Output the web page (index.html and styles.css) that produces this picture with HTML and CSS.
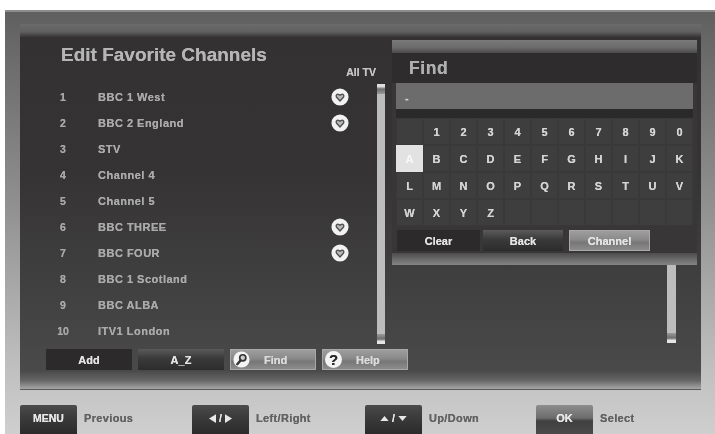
FILE: index.html
```html
<!DOCTYPE html>
<html lang="en">
<head>
<meta charset="utf-8">
<title>Edit Favorite Channels</title>
<link rel="stylesheet" href="styles.css">
</head>
<body>
<svg class="defs" width="0" height="0" aria-hidden="true">
  <symbol id="heart" viewBox="0 0 20 20">
    <circle cx="10" cy="10" r="9.5" fill="#f2f2f2"/>
    <path d="M10 14.5 L6 10 C5 7.5 7 6.5 8.2 7 L10 8 L11.8 7 C13 6.5 15 7.5 14 10 Z" fill="#b8b8b8" stroke="#4f4f4f" stroke-width="1.5" stroke-linejoin="round"/>
  </symbol>
</svg>
<main class="screen">
  <section class="panel">
    <div class="band"></div>
    <div class="content">
      <div class="left">
        <h1 class="title">Edit Favorite Channels</h1>
        <div class="all-tv">All TV</div>
        <div class="list-wrap">
          <ol class="list">
            <li class="row"><span class="num">1</span><span class="name">BBC 1 West</span><svg class="heart"><use href="#heart"/></svg></li>
            <li class="row"><span class="num">2</span><span class="name">BBC 2 England</span><svg class="heart"><use href="#heart"/></svg></li>
            <li class="row"><span class="num">3</span><span class="name">STV</span></li>
            <li class="row"><span class="num">4</span><span class="name">Channel 4</span></li>
            <li class="row"><span class="num">5</span><span class="name">Channel 5</span></li>
            <li class="row"><span class="num">6</span><span class="name">BBC THREE</span><svg class="heart"><use href="#heart"/></svg></li>
            <li class="row"><span class="num">7</span><span class="name">BBC FOUR</span><svg class="heart"><use href="#heart"/></svg></li>
            <li class="row"><span class="num">8</span><span class="name">BBC 1 Scotland</span></li>
            <li class="row"><span class="num">9</span><span class="name">BBC ALBA</span></li>
            <li class="row"><span class="num">10</span><span class="name">ITV1 London</span></li>
          </ol>
          <div class="scrollbar"><span class="cap cap-up"></span><span class="cap cap-down"></span></div>
        </div>
        <div class="actions">
          <div class="btn btn-dark">Add</div>
          <div class="btn btn-mid">A_Z</div>
          <div class="btn btn-light">
            <svg class="btn-icon" viewBox="0 0 20 20"><circle cx="10" cy="10" r="9.5" fill="#f4f4f4"/><circle cx="11.5" cy="8" r="3.6" fill="#ccc" stroke="#333" stroke-width="2"/><path d="M9 11 L5 15.5" stroke="#333" stroke-width="2.8" stroke-linecap="round"/></svg>
            <span class="btn-label">Find</span>
          </div>
          <div class="btn btn-light">
            <span class="help-icon">?</span>
            <span class="btn-label">Help</span>
          </div>
        </div>
      </div>
      <div class="right">
        <div class="find">
          <div class="find-band"></div>
          <h2 class="find-title">Find</h2>
          <div class="find-input">-</div>
          <div class="keys">
            <span class="key"></span><span class="key">1</span><span class="key">2</span><span class="key">3</span><span class="key">4</span><span class="key">5</span><span class="key">6</span><span class="key">7</span><span class="key">8</span><span class="key">9</span><span class="key">0</span>
            <span class="key key-on">A</span><span class="key">B</span><span class="key">C</span><span class="key">D</span><span class="key">E</span><span class="key">F</span><span class="key">G</span><span class="key">H</span><span class="key">I</span><span class="key">J</span><span class="key">K</span>
            <span class="key">L</span><span class="key">M</span><span class="key">N</span><span class="key">O</span><span class="key">P</span><span class="key">Q</span><span class="key">R</span><span class="key">S</span><span class="key">T</span><span class="key">U</span><span class="key">V</span>
            <span class="key">W</span><span class="key">X</span><span class="key">Y</span><span class="key">Z</span><span class="key"></span><span class="key"></span><span class="key"></span><span class="key"></span><span class="key"></span><span class="key"></span><span class="key"></span>
          </div>
          <div class="find-actions">
            <div class="btn fbtn-clear btn-dark">Clear</div>
            <div class="btn fbtn-back btn-mid">Back</div>
            <div class="btn fbtn-channel btn-light">Channel</div>
          </div>
          <div class="find-foot"></div>
        </div>
        <div class="scrollbar scrollbar-right"><span></span><span class="cap cap-down"></span></div>
      </div>
    </div>
    <div class="foot"></div>
  </section>
  <footer class="legend">
    <div class="hint hint-menu"><span class="hkey">MENU</span><span class="hlabel">Previous</span></div>
    <div class="hint hint-lr"><span class="hkey"><svg class="arrow" viewBox="0 0 8 10"><path d="M8 0 V10 L0 5 Z"/></svg><i class="slash">/</i><svg class="arrow" viewBox="0 0 8 10"><path d="M0 0 V10 L8 5 Z"/></svg></span><span class="hlabel">Left/Right</span></div>
    <div class="hint hint-ud"><span class="hkey"><svg class="arrow-v" viewBox="0 0 10 6"><path d="M0 6 H10 L5 0 Z"/></svg><i class="slash">/</i><svg class="arrow-v" viewBox="0 0 10 6"><path d="M0 0 H10 L5 6 Z"/></svg></span><span class="hlabel">Up/Down</span></div>
    <div class="hint"><span class="hkey hkey-ok">OK</span><span class="hlabel">Select</span></div>
  </footer>
</main>
</body>
</html>
```
FILE: styles.css
```css
* { box-sizing: border-box; }
html, body { margin: 0; padding: 0; background: #fff; overflow: hidden; }
body { width: 715px; height: 434px; font-family: "Liberation Sans", Arial, sans-serif; font-weight: 700; }
.defs { position: absolute; }

.screen {
  margin: 10px 0 0 5px;
  width: 710px;
  height: 424px;
  padding: 14px 0 0 15px;
  overflow: hidden;
  filter: blur(0.7px);
  background: linear-gradient(180deg, #5f5f5f 0, #6c6c6c 12%, #8f8f8f 45%, #c0c0c0 85%, #cfcfcf 100%);
  box-shadow: inset 0 2px 0 #8d8d8d;
  text-shadow: 0 0 .5px currentColor;
}

.panel {
  width: 681px;
  height: 366px;
  display: flex;
  flex-direction: column;
  background: linear-gradient(180deg, #333132 0, #353334 40%, #4c4c4c 100%);
}
.band { height: 13px; background: linear-gradient(180deg, #6b6b6b 0, #606060 60%, #383637 100%); }
.foot { height: 20px; border-bottom: 1px solid #5a5a5a; background: linear-gradient(180deg, #474747 0, #666 55%, #a6a6a6 100%); }
.content { height: 333px; display: flex; }

.left { width: 372px; flex: none; padding: 7px 0 0 26px; }
.title { margin: 0 0 0 15px; font-size: 19px; line-height: 22px; color: #b5b5b5; white-space: nowrap; }
.all-tv { height: 12px; line-height: 12px; font-size: 10.5px; text-align: right; padding-right: 16px; color: #c4c4c4; margin-bottom: 6px; }

.list-wrap { display: flex; height: 260px; }
.list { list-style: none; margin: 0; padding: 0; width: 331px; }
.row { height: 26px; display: flex; align-items: center; }
.num { width: 34px; text-align: center; font-size: 10.5px; color: #a8a8a8; flex: none; }
.name { margin-left: 18px; width: 232px; font-size: 11px; letter-spacing: .5px; color: #aaa; white-space: nowrap; flex: none; }
.heart { width: 18px; height: 18px; flex: none; margin-left: 1px; }

.scrollbar {
  width: 8px;
  background: #bdbdbd;
  display: flex;
  flex-direction: column;
  justify-content: space-between;
  align-items: stretch;
}
.cap { height: 10px; }
.cap-up { background: linear-gradient(180deg, #e0e0e0 0, #dcdcdc 25%, #6e6e6e 50%, #9a9a9a 100%); }
.cap-down { background: linear-gradient(180deg, #9a9a9a 0, #6e6e6e 50%, #e6e6e6 75%, #e6e6e6 100%); }

.actions { display: flex; gap: 6px; margin-top: 5px; width: 361px; }
.btn {
  height: 21px;
  flex: none;
  width: 86px;
  display: flex;
  align-items: center;
  justify-content: center;
  font-size: 11px;
  color: #e4e4e4;
}
.btn-dark { background: #2c2a2b; }
.btn-mid { background: linear-gradient(180deg, #5b5b5b 0, #3a3a3a 45%, #2c2c2c 100%); }
.btn-light { background: linear-gradient(180deg, #a0a0a0 0, #8a8a8a 45%, #777 60%, #8f8f8f 100%); box-shadow: inset 0 0 0 1px #a8a8a8; }
.actions .btn-light { justify-content: flex-start; padding-left: 3px; }
.btn-icon { width: 17px; height: 17px; flex: none; }
.help-icon {
  width: 17px; height: 17px; flex: none; border-radius: 50%;
  background: #f4f4f4; color: #2b2b2b; font-size: 15px; line-height: 17px; text-align: center;
}
.btn-label { margin-left: 14px; color: #dcdcdc; }

.right { width: 309px; flex: none; padding-top: 3px; }
.find { width: 305px; height: 225px; background: #383637; display: flex; flex-direction: column; }
.find-band { height: 13px; background: linear-gradient(180deg, #7a7a7a 0, #6a6a6a 60%, #4a4a4a 100%); }
.find-title { margin: 0; height: 30px; padding-left: 17px; font-size: 17.5px; line-height: 30px; color: #b0b0b0; background: #2e2c2d; letter-spacing: .6px; }
.find-input {
  margin: 0 4px; height: 26px; background: #6c6c6c; color: #d0d0d0;
  font-size: 11px; line-height: 30px; padding-left: 9px;
}
.keys {
  margin: 0 4px;
  padding-top: 9px;
  display: grid;
  grid-template-columns: repeat(11, 27px);
  grid-auto-rows: 27px;
  background: linear-gradient(180deg, #2b2a2a 0, #2b2a2a 9px, transparent 9px);
}
.key {
  display: flex; align-items: center; justify-content: center;
  font-size: 11px; color: #d4d4d4;
  background: #3e3e3e;
  box-shadow: inset 0 0 0 1px #393939;
}
.key-on { background: #e2e2e2; color: #f6f6f6; box-shadow: none; }
.find-actions { display: flex; margin: 4px 0 0 5px; height: 21px; }
.fbtn-clear { width: 83px; }
.fbtn-back { width: 80px; margin-left: 3px; }
.fbtn-channel { width: 81px; margin-left: 6px; }
.find-foot { height: 12px; margin-top: 2px; background: linear-gradient(180deg, #4c4c4c 0, #6f6f6f 60%, #838383 100%); }

.scrollbar-right { width: 9px; height: 78px; margin-left: 275px; }

.legend { display: flex; padding-top: 15px; height: 44px; }
.hint { display: flex; align-items: flex-start; flex: none; }
.hint-menu { width: 172px; }
.hint-lr { width: 173px; }
.hint-ud { width: 171px; }
.hkey {
  width: 57px; height: 29px; flex: none;
  display: flex; align-items: center; justify-content: center; gap: 3px;
  background: linear-gradient(180deg, #4b4b4b 0, #3a3a3a 45%, #2b2b2b 100%);
  color: #e8e8e8; font-size: 10.5px; border-radius: 2px 2px 0 0;
  padding-bottom: 3px;
}
.hkey-ok { background: linear-gradient(180deg, #8d8d8d 0, #6c6c6c 45%, #404040 55%, #4a4a4a 100%); font-size: 11px; }
.hlabel { margin-left: 7px; margin-top: 6px; font-size: 11px; letter-spacing: .35px; line-height: 14px; color: #626262; white-space: nowrap; }
.arrow { width: 7px; height: 9px; fill: #e8e8e8; }
.arrow-v { width: 9px; height: 5px; fill: #e8e8e8; }
.slash { font-style: normal; }
```
